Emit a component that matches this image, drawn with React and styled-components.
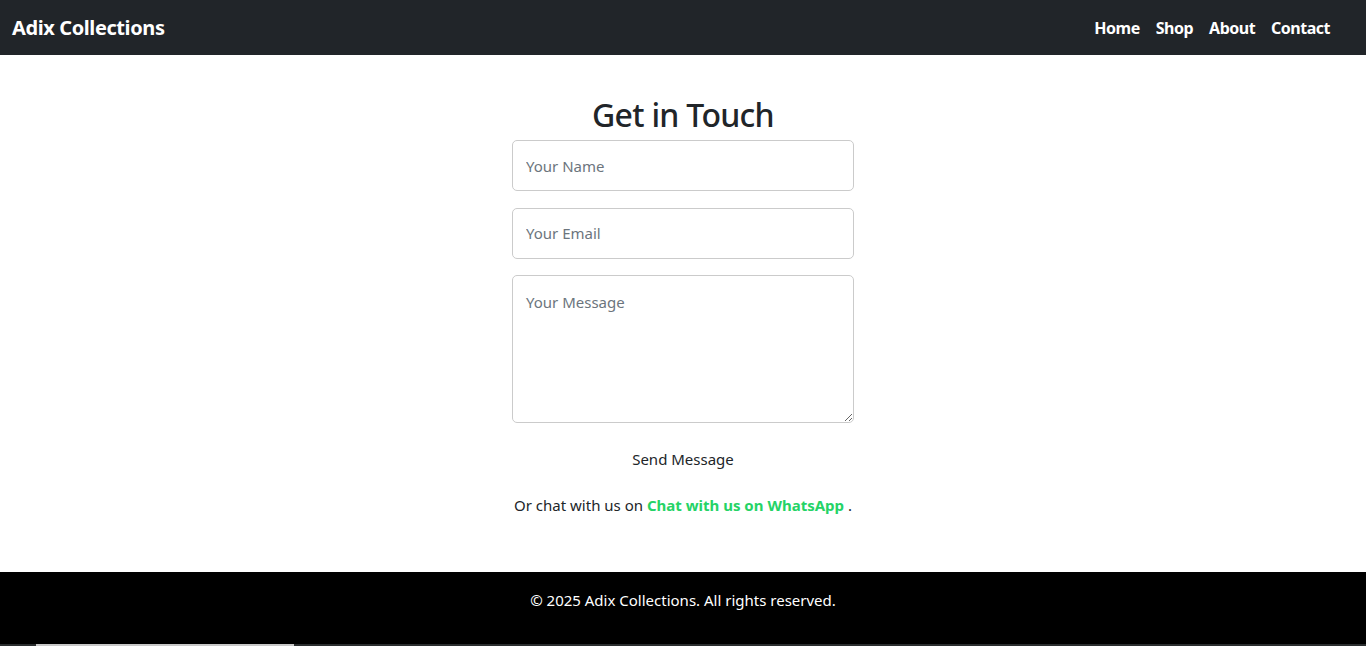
import React from "react";
import styled, { createGlobalStyle } from "styled-components";

const Global = createGlobalStyle`
  * { box-sizing: border-box; }
  html, body { margin: 0; padding: 0; }
  body {
    font-family: "Noto Sans", "Open Sans", sans-serif;
    font-size: 16px;
    line-height: 1.5;
    color: #212529;
    background: #fff;
  }
`;

const Page = styled.div`
  min-height: 646px;
  display: flex;
  flex-direction: column;
`;

const NavBar = styled.nav`
  height: 55px;
  background: #212529;
  display: flex;
  align-items: center;
  justify-content: space-between;
  padding: 0 36px 0 12px;
`;

const Brand = styled.a`
  color: #fff;
  font-weight: 700;
  font-size: 20px;
  text-decoration: none;
  letter-spacing: -0.4px;
`;

const NavList = styled.div`
  display: flex;
  gap: 16px;
`;

const NavLink = styled.a`
  color: #fff;
  font-weight: 700;
  font-size: 16px;
  text-decoration: none;
  letter-spacing: -0.5px;
`;

const Main = styled.main`
  flex: 1;
  display: flex;
  flex-direction: column;
  align-items: center;
  padding: 41px 0 48px;
`;

const Title = styled.h2`
  margin: 0 0 6px;
  font-size: 32px;
  font-weight: 500;
  line-height: 38px;
  letter-spacing: -0.7px;
`;

const Form = styled.form`
  width: 342px;
  display: flex;
  flex-direction: column;
  gap: 16.5px;
`;

const Field = styled.input`
  height: 51px;
  width: 100%;
  border: 1px solid #cbcbcb;
  border-radius: 5px;
  padding: 0 13px;
  font: inherit;
  font-size: 15px;
  color: #212529;
  &::placeholder { color: #6c757d; }
`;

const Area = styled.textarea`
  height: 148px;
  width: 100%;
  border: 1px solid #cbcbcb;
  border-radius: 5px;
  padding: 15px 13px 12px;
  font: inherit;
  font-size: 15px;
  color: #212529;
  resize: vertical;
  &::placeholder { color: #6c757d; }
`;

const SendButton = styled.button`
  align-self: center;
  background: transparent;
  border: none;
  font: inherit;
  font-size: 15px;
  color: #212529;
  padding: 8px 12px;
  margin-top: 0;
  cursor: pointer;
`;

const ChatLine = styled.p`
  margin: 16px 0 0;
  font-size: 15px;
  text-align: center;
`;

const WhatsLink = styled.a`
  color: #25d366;
  font-weight: 700;
  text-decoration: none;
`;

const Footer = styled.footer`
  background: #000;
  color: #fff;
  text-align: center;
  height: 72px;
  padding-top: 17px;
  font-size: 15px;
`;

const ScrollStrip = styled.div`
  height: 2px;
  background: #2a2d2e;
  position: relative;
`;

const ScrollThumb = styled.div`
  position: absolute;
  left: 36px;
  top: 0;
  width: 258px;
  height: 2px;
  background: #c8c8c8;
`;

export default function App() {
  return (
    <Page>
      <Global />
      <NavBar>
        <Brand href="#">Adix Collections</Brand>
        <NavList>
          <NavLink href="#">Home</NavLink>
          <NavLink href="#">Shop</NavLink>
          <NavLink href="#">About</NavLink>
          <NavLink href="#">Contact</NavLink>
        </NavList>
      </NavBar>
      <Main>
        <Title>Get in Touch</Title>
        <Form onSubmit={(e) => e.preventDefault()}>
          <Field type="text" placeholder="Your Name" />
          <Field type="email" placeholder="Your Email" />
          <Area placeholder="Your Message" />
          <SendButton type="submit">Send Message</SendButton>
        </Form>
        <ChatLine>
          Or chat with us on <WhatsLink href="#">Chat with us on WhatsApp</WhatsLink> .
        </ChatLine>
      </Main>
      <Footer>© 2025 Adix Collections. All rights reserved.</Footer>
      <ScrollStrip>
        <ScrollThumb />
      </ScrollStrip>
    </Page>
  );
}
